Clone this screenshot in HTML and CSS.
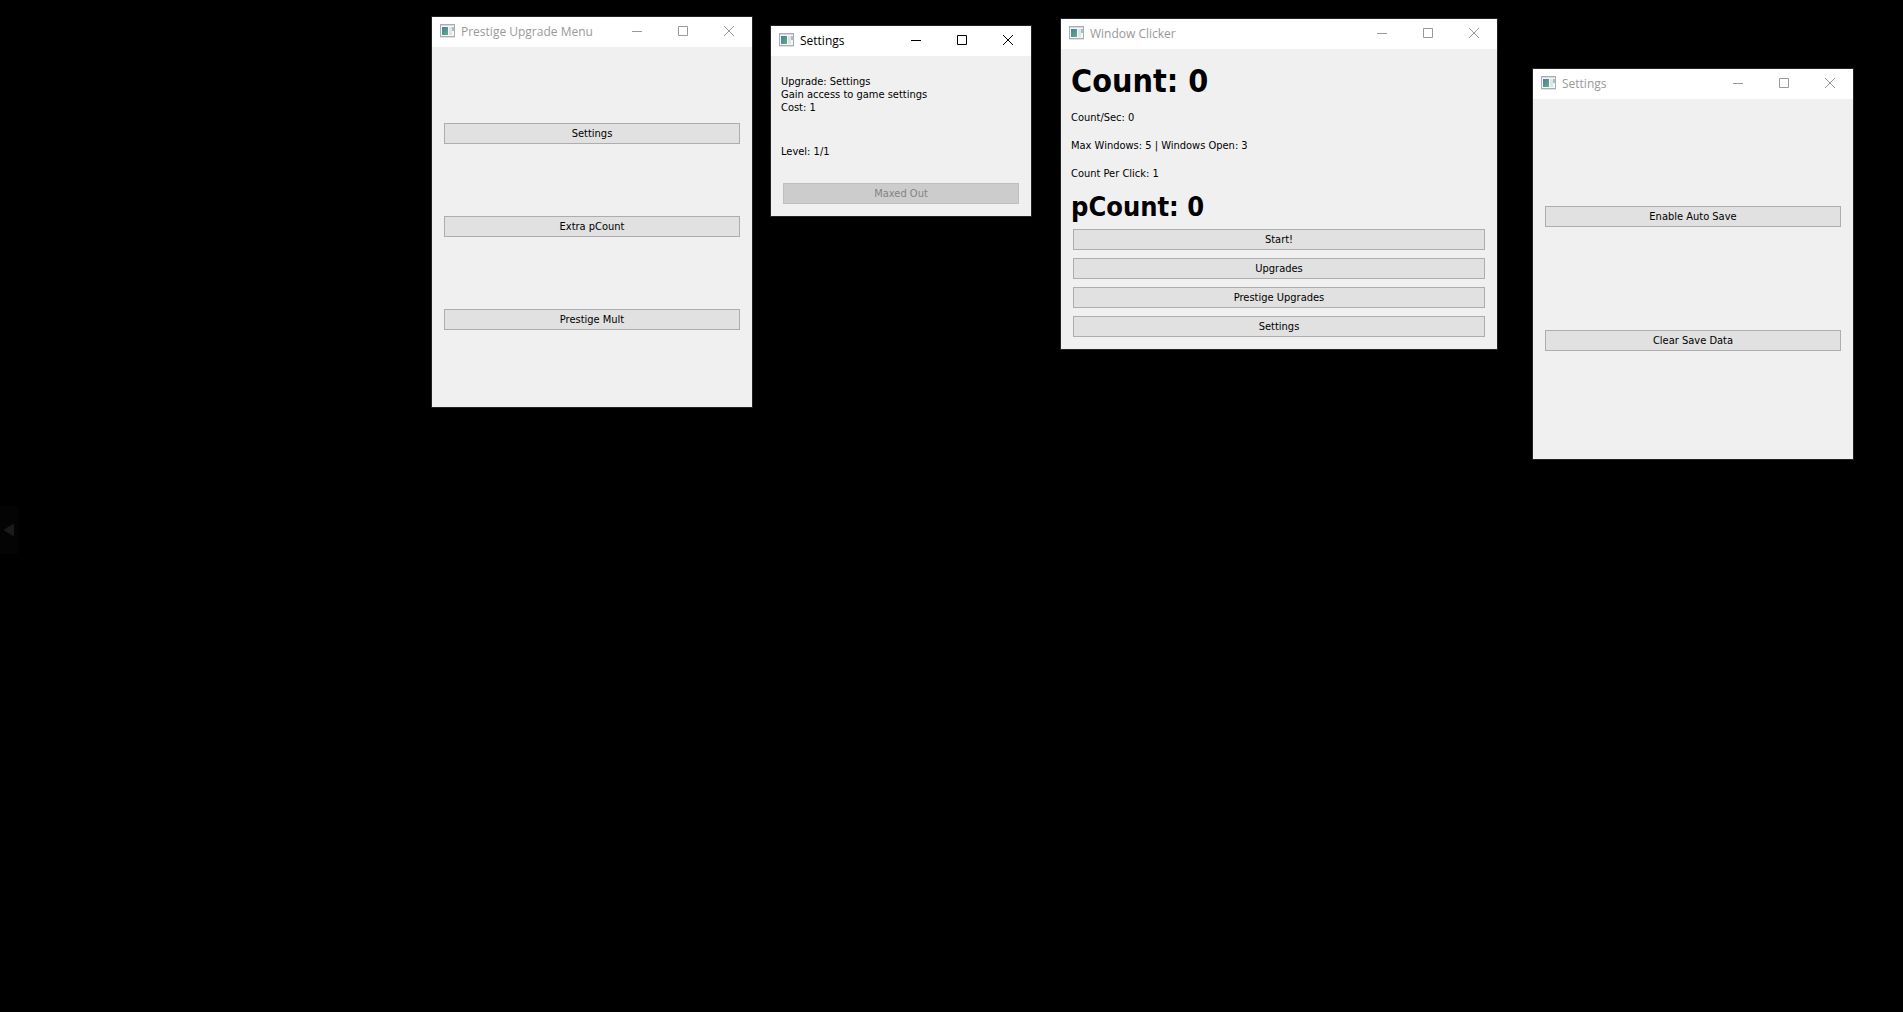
FILE: index.html
```html
<!DOCTYPE html>
<html lang="en">

<head>
    <meta charset="UTF-8">
    <meta name="viewport" content="width=device-width, initial-scale=1.0">
    <title>Window Clicker</title>
    <link rel="stylesheet" href="styles.css">
</head>

<body>
    <!-- Shared icons -->
    <svg class="sprite" aria-hidden="true">
        <defs>
            <linearGradient id="pane" x1="0" y1="0" x2="1" y2="1">
                <stop offset="0" stop-color="#4a7aa8" />
                <stop offset="1" stop-color="#5fb07c" />
            </linearGradient>
        </defs>
        <symbol id="icon-app" viewBox="0 0 16 14">
            <rect x="0" y="0" width="15" height="13" fill="#a9adb5" />
            <rect x="1" y="1" width="13" height="1" fill="#d5d8de" />
            <rect x="1" y="2" width="13" height="10" fill="#f7f7f8" />
            <rect x="2" y="3" width="6" height="8" fill="url(#pane)" />
            <rect x="9" y="3" width="3" height="8" fill="#e2e3e6" />
            <rect x="12" y="3" width="2" height="4" fill="#9fc3bd" />
            <rect x="0" y="13" width="15" height="1" fill="#dfe1e5" />
        </symbol>
        <symbol id="icon-min" viewBox="0 0 10 10">
            <path d="M0 5.5h10" fill="none" stroke="currentColor" />
        </symbol>
        <symbol id="icon-max" viewBox="0 0 10 10">
            <path d="M0.5 0.5h9v9h-9z" fill="none" stroke="currentColor" />
        </symbol>
        <symbol id="icon-close" viewBox="0 0 10 10">
            <path d="M0 0l10 10M10 0l-10 10" fill="none" stroke="currentColor" />
        </symbol>
    </svg>

    <main class="desktop">
        <section class="window window-prestige">
            <header class="titlebar">
                <svg class="app-icon"><use href="#icon-app" /></svg>
                <span class="title">Prestige Upgrade Menu</span>
                <button class="control" aria-label="Minimize"><svg><use href="#icon-min" /></svg></button>
                <button class="control" aria-label="Maximize"><svg><use href="#icon-max" /></svg></button>
                <button class="control" aria-label="Close"><svg><use href="#icon-close" /></svg></button>
            </header>
            <div class="content menu">
                <button class="btn">Settings</button>
                <button class="btn">Extra pCount</button>
                <button class="btn">Prestige Mult</button>
            </div>
        </section>

        <section class="window window-upgrade active">
            <header class="titlebar">
                <svg class="app-icon"><use href="#icon-app" /></svg>
                <span class="title">Settings</span>
                <button class="control" aria-label="Minimize"><svg><use href="#icon-min" /></svg></button>
                <button class="control" aria-label="Maximize"><svg><use href="#icon-max" /></svg></button>
                <button class="control" aria-label="Close"><svg><use href="#icon-close" /></svg></button>
            </header>
            <div class="content upgrade">
                <p>Upgrade: Settings<br>Gain access to game settings<br>Cost: 1</p>
                <p>Level: 1/1</p>
                <button class="btn" disabled>Maxed Out</button>
            </div>
        </section>

        <section class="window window-main">
            <header class="titlebar">
                <svg class="app-icon"><use href="#icon-app" /></svg>
                <span class="title">Window Clicker</span>
                <button class="control" aria-label="Minimize"><svg><use href="#icon-min" /></svg></button>
                <button class="control" aria-label="Maximize"><svg><use href="#icon-max" /></svg></button>
                <button class="control" aria-label="Close"><svg><use href="#icon-close" /></svg></button>
            </header>
            <div class="content clicker">
                <h1>Count: 0</h1>
                <div class="stats">
                    <p>Count/Sec: 0</p>
                    <p>Max Windows: 5 | Windows Open: 3</p>
                    <p>Count Per Click: 1</p>
                </div>
                <h2>pCount: 0</h2>
                <div class="actions">
                    <button class="btn">Start!</button>
                    <button class="btn">Upgrades</button>
                    <button class="btn">Prestige Upgrades</button>
                    <button class="btn">Settings</button>
                </div>
            </div>
        </section>

        <section class="window window-settings">
            <header class="titlebar">
                <svg class="app-icon"><use href="#icon-app" /></svg>
                <span class="title">Settings</span>
                <button class="control" aria-label="Minimize"><svg><use href="#icon-min" /></svg></button>
                <button class="control" aria-label="Maximize"><svg><use href="#icon-max" /></svg></button>
                <button class="control" aria-label="Close"><svg><use href="#icon-close" /></svg></button>
            </header>
            <div class="content menu menu-wide">
                <button class="btn">Enable Auto Save</button>
                <button class="btn">Clear Save Data</button>
            </div>
        </section>

        <button class="edge-handle" aria-label="Previous">
            <svg viewBox="0 0 10 12"><path d="M9 1v10L1 6z" fill="#1b1b1b" stroke="#1b1b1b" stroke-width="2" stroke-linejoin="round" /></svg>
        </button>
    </main>
</body>

</html>
```
FILE: styles.css
```css
* {
    box-sizing: border-box;
}

body {
    margin: 0;
    background-color: #000;
    color: #000;
    font-family: Tahoma, "DejaVu Sans Condensed", sans-serif;
    font-size: 11px;
    line-height: 13px;
}

h1,
h2,
p {
    margin: 0;
}

button {
    font: inherit;
    color: inherit;
}

.sprite {
    position: absolute;
    width: 0;
    height: 0;
}

.desktop {
    position: relative;
    min-height: 100vh;
    overflow: hidden;
}

/* Windows */
.window {
    position: absolute;
    border: 1px solid #222;
    background-color: #f0f0f0;
}

.window-prestige {
    left: 431px;
    top: 16px;
    width: 322px;
}

.window-upgrade {
    left: 770px;
    top: 25px;
    width: 262px;
}

.window-main {
    left: 1060px;
    top: 18px;
    width: 438px;
}

.window-settings {
    left: 1532px;
    top: 68px;
    width: 322px;
}

.titlebar {
    display: flex;
    align-items: center;
    height: 30px;
    padding-left: 8px;
    padding-bottom: 2px;
    background-color: #fff;
    color: #999;
    font-family: "Segoe UI", "Open Sans", sans-serif;
    font-size: 12px;
    line-height: 16px;
}

.active .titlebar {
    color: #000;
}

.app-icon {
    width: 16px;
    height: 14px;
    margin-right: 5px;
}

.title {
    flex: 1;
    padding-top: 2px;
    white-space: nowrap;
}

.control {
    display: flex;
    align-items: center;
    justify-content: center;
    width: 46px;
    height: 28px;
    padding: 0;
    border: none;
    background: none;
}

.control svg {
    width: 10px;
    height: 10px;
}

.control:hover {
    background-color: #e5e5e5;
}

/* Window content */
.content {
    display: flex;
    flex-direction: column;
    padding: 12px 10px;
}

.btn {
    height: 21px;
    margin: 0 2px;
    padding: 0;
    border: 1px solid #adadad;
    background-color: #e1e1e1;
}

.btn:hover {
    border-color: #0078d7;
    background-color: #e5f1fb;
}

.btn:disabled {
    border-color: #bfbfbf;
    background-color: #ccc;
    color: #838383;
}

.menu {
    justify-content: center;
    gap: 72px;
    min-height: 360px;
    padding-bottom: 13px;
}

.menu-wide {
    gap: 103px;
}

.upgrade {
    gap: 31px;
    padding-top: 19px;
}

.upgrade .btn {
    margin-top: -6px;
}

.clicker h1 {
    font-size: 32px;
    line-height: 40px;
}

.stats {
    display: flex;
    flex-direction: column;
    gap: 15px;
    padding: 10px 0;
}

.clicker h2 {
    font-size: 27px;
    line-height: 34px;
}

.actions {
    display: flex;
    flex-direction: column;
    gap: 8px;
    padding-top: 5px;
}

/* Handle on the left edge of the desktop */
.edge-handle {
    position: absolute;
    left: 0;
    top: 50%;
    width: 19px;
    height: 48px;
    padding: 0 0 0 4px;
    border: none;
    border-radius: 0 4px 4px 0;
    background-color: #040404;
    text-align: left;
}

.edge-handle svg {
    display: block;
    width: 10px;
    height: 12px;
}
```
